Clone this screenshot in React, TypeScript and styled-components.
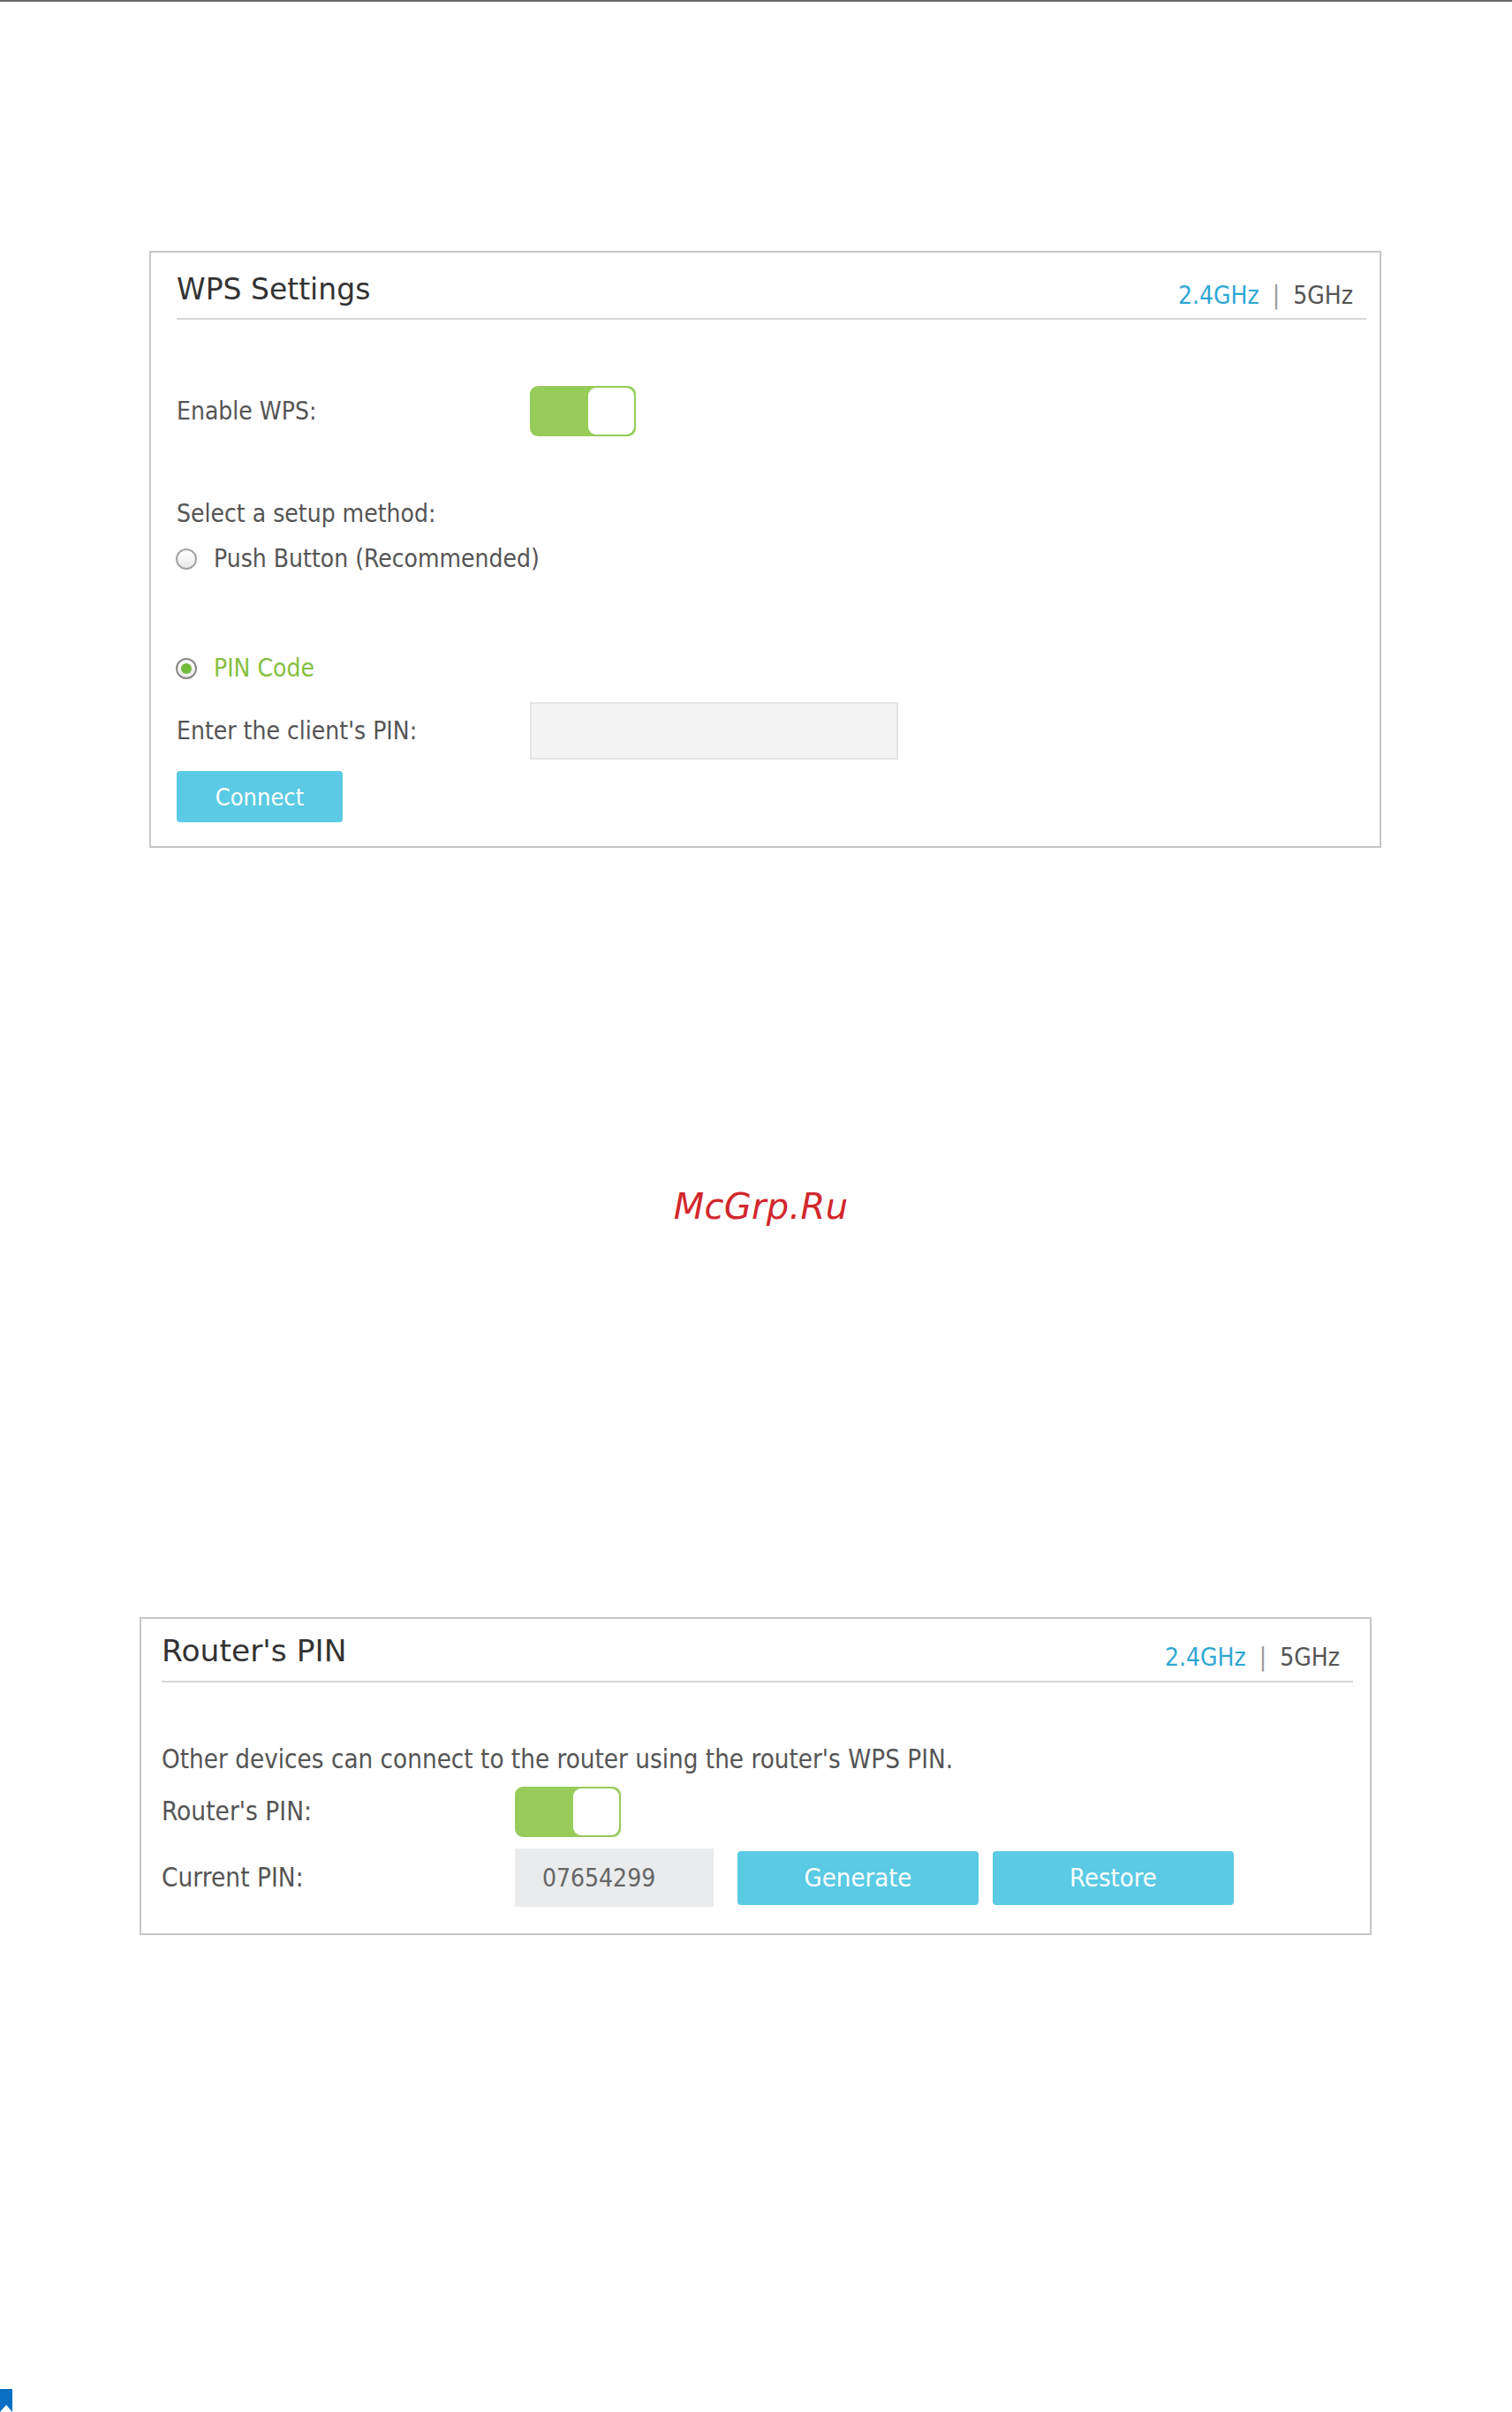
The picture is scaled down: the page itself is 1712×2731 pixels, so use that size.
import React from "react";
import styled, { createGlobalStyle } from "styled-components";

const UI_FONT = `"DejaVu Sans Condensed", "DejaVu Sans", sans-serif`;
const TITLE_FONT = `"DejaVu Sans", sans-serif`;

const Global = createGlobalStyle`
  html, body { margin: 0; padding: 0; background: #ffffff; }
  body { font-family: ${UI_FONT}; }
  * { box-sizing: border-box; }
`;

const Page = styled.div`
  width: 1712px;
  height: 2731px;
  border-top: 2px solid #6a6a6a;
  display: flex;
  flex-direction: column;
  overflow: hidden;
  background: #fff;
`;

const Card = styled.section<{ $mt: number; $ml: number; $pad: string }>`
  margin: ${(p) => p.$mt}px 0 0 ${(p) => p.$ml}px;
  width: 1395px;
  border: 2px solid #c6c6c6;
  padding: ${(p) => p.$pad};
  background: #fff;
`;

const Header = styled.header<{ $pb: number }>`
  display: flex;
  align-items: flex-end;
  justify-content: space-between;
  padding-bottom: ${(p) => p.$pb}px;
  border-bottom: 2px solid #d6d6d6;
`;

const Title = styled.h2<{ $fs?: number }>`
  margin: 0;
  font-family: ${TITLE_FONT};
  font-weight: normal;
  font-size: ${(p) => p.$fs ?? 33}px;
  line-height: 40px;
  color: #333;
`;

const Tabs = styled.div<{ $mb: number }>`
  display: flex;
  align-items: baseline;
  margin-right: 15px;
  margin-bottom: ${(p) => p.$mb}px;
  font-family: ${UI_FONT};
  font-size: 28px;
  line-height: 32px;
`;

const Tab = styled.span<{ $active?: boolean }>`
  color: ${(p) => (p.$active ? "#2ea7d4" : "#555")};
`;

const Divider = styled.span`
  color: #9a9a9a;
  margin: 0 15px;
`;

const Row = styled.div<{ $mt: number; $h: number }>`
  display: flex;
  align-items: center;
  margin-top: ${(p) => p.$mt}px;
  height: ${(p) => p.$h}px;
`;

const Label = styled.span<{ $fs?: number }>`
  width: 400px;
  flex-shrink: 0;
  font-family: ${UI_FONT};
  font-size: ${(p) => p.$fs ?? 28}px;
  line-height: 34px;
  color: #555;
`;

const Line = styled.div<{ $mt: number; $fs?: number }>`
  margin-top: ${(p) => p.$mt}px;
  font-family: ${UI_FONT};
  font-size: ${(p) => p.$fs ?? 28}px;
  line-height: 34px;
  color: #555;
`;

const Toggle = styled.div`
  width: 120px;
  height: 57px;
  border-radius: 9px;
  background: #97cc5a;
  padding: 2px;
  display: flex;
  justify-content: flex-end;
`;

const Knob = styled.div`
  width: 52px;
  height: 100%;
  border-radius: 9px;
  background: #fff;
`;

const RadioRow = styled.label<{ $mt: number }>`
  display: flex;
  align-items: center;
  gap: 19px;
  margin-top: ${(p) => p.$mt}px;
  height: 34px;
  margin-left: -1px;
`;

const RadioCircle = styled.span<{ $checked?: boolean }>`
  width: 24px;
  height: 24px;
  border-radius: 50%;
  border: 2px solid ${(p) => (p.$checked ? "#888" : "#a4a4a4")};
  background: linear-gradient(#ffffff, #e9e9e9);
  display: flex;
  align-items: center;
  justify-content: center;
  flex-shrink: 0;
  &::after {
    content: "";
    display: ${(p) => (p.$checked ? "block" : "none")};
    width: 12px;
    height: 12px;
    border-radius: 50%;
    background: #72b93c;
  }
`;

const RadioText = styled.span<{ $checked?: boolean }>`
  font-family: ${UI_FONT};
  font-size: 28px;
  line-height: 34px;
  color: ${(p) => (p.$checked ? "#85bf3f" : "#555")};
`;

const PinInput = styled.input`
  width: 417px;
  height: 65px;
  background: #f4f4f4;
  border: 2px solid #e4e4e4;
  outline: none;
  padding: 0 16px;
  font-family: ${UI_FONT};
  font-size: 28px;
  color: #555;
`;

const ValueBox = styled.input`
  width: 225px;
  height: 66px;
  background: #e9ebec;
  border: none;
  outline: none;
  padding: 0 0 0 31px;
  font-family: ${UI_FONT};
  font-size: 28px;
  color: #666;
`;

const Button = styled.button<{ $w: number; $h: number; $fs: number; $ml?: number }>`
  width: ${(p) => p.$w}px;
  height: ${(p) => p.$h}px;
  margin-left: ${(p) => p.$ml ?? 0}px;
  border: none;
  border-radius: 4px;
  background: #5bcae4;
  color: #fff;
  font-family: ${UI_FONT};
  font-size: ${(p) => p.$fs}px;
  padding: 0;
  cursor: pointer;
  flex-shrink: 0;
`;

const Watermark = styled.div`
  margin-top: 382px;
  padding-left: 11px;
  text-align: center;
  font-family: "DejaVu Sans", sans-serif;
  font-style: italic;
  font-size: 40px;
  line-height: 48px;
  color: #d2272c;
  letter-spacing: 0.3px;
`;

const Footer = styled.footer`
  margin-top: auto;
  height: 26px;
  display: flex;
  align-items: flex-end;
`;

const FreqTabs = ({ mb }: { mb: number }) => (
  <Tabs $mb={mb}>
    <Tab $active>2.4GHz</Tab>
    <Divider>|</Divider>
    <Tab>5GHz</Tab>
  </Tabs>
);

export default function App() {
  return (
    <>
      <Global />
      <Page>
        <Card $mt={282} $ml={169} $pad="22px 15px 27px 29px">
          <Header $pb={12}>
            <Title>WPS Settings</Title>
            <FreqTabs mb={-3} />
          </Header>

          <Row $mt={75} $h={57}>
            <Label>Enable WPS:</Label>
            <Toggle>
              <Knob />
            </Toggle>
          </Row>

          <Line $mt={71}>Select a setup method:</Line>

          <RadioRow $mt={17}>
            <RadioCircle />
            <RadioText>Push Button (Recommended)</RadioText>
          </RadioRow>

          <RadioRow $mt={90}>
            <RadioCircle $checked />
            <RadioText $checked>PIN Code</RadioText>
          </RadioRow>

          <Row $mt={21} $h={65}>
            <Label>Enter the client's PIN:</Label>
            <PinInput type="text" defaultValue="" />
          </Row>

          <Row $mt={13} $h={58}>
            <Button $w={188} $h={58} $fs={27}>
              Connect
            </Button>
          </Row>
        </Card>

        <Watermark>McGrp.Ru</Watermark>

        <Card $mt={441} $ml={158} $pad="16px 19px 30px 23px">
          <Header $pb={14}>
            <Title $fs={34.5}>Router's PIN</Title>
            <FreqTabs mb={-4} />
          </Header>

          <Line $mt={70} $fs={29.3}>
            Other devices can connect to the router using the router's WPS PIN.
          </Line>

          <Row $mt={13} $h={58}>
            <Label $fs={29.5}>Router's PIN:</Label>
            <Toggle>
              <Knob />
            </Toggle>
          </Row>

          <Row $mt={13} $h={66}>
            <Label $fs={29.5}>Current PIN:</Label>
            <ValueBox type="text" readOnly value="07654299" />
            <Button $w={273} $h={61} $fs={29} $ml={27}>
              Generate
            </Button>
            <Button $w={273} $h={61} $fs={29} $ml={16}>
              Restore
            </Button>
          </Row>
        </Card>

        <Footer>
          <svg width="14" height="26" viewBox="0 0 14 26" aria-hidden="true">
            <path d="M0 0 H14 V26 L7 18 L0 26 Z" fill="#0a6fc2" />
          </svg>
        </Footer>
      </Page>
    </>
  );
}
